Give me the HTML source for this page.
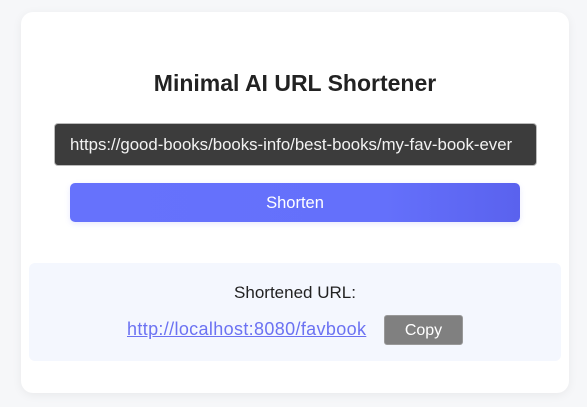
<!DOCTYPE html>
<html><head><style>
body{margin:0;width:587px;height:407px;background:#f6f7f9;font-family:"Liberation Sans",sans-serif;position:relative;overflow:hidden}
.card{position:absolute;left:21px;top:12px;width:548px;height:381px;background:#fff;border-radius:12px;box-shadow:0 2px 10px rgba(0,0,0,0.06)}
.t{position:absolute;left:0;width:590px;top:70px;text-align:center;font-weight:bold;font-size:23px;color:#222}
.in{position:absolute;left:54px;top:123px;width:483px;height:43px;box-sizing:border-box;background:#3c3c3c;border:1px solid #bbb;border-radius:4px;color:#f2f2f2;font-size:16.8px;line-height:41px;padding-left:15px;white-space:nowrap}
.btn{position:absolute;left:70px;top:183px;width:450px;height:39px;border-radius:5px;background:linear-gradient(90deg,#6672fc,#6470fb 70%,#5a62ee);color:#fff;font-size:16.5px;text-align:center;line-height:40px;box-shadow:0 2px 6px rgba(100,110,250,0.15)}
.res{position:absolute;left:29px;top:263px;width:532px;height:98px;background:#f4f7fe;border-radius:6px}
.l{position:absolute;left:0;width:590px;top:283px;text-align:center;font-size:17px;color:#222}
.a{position:absolute;left:127px;top:319px;font-size:18px;letter-spacing:0.35px;color:#6b72f2;text-decoration:underline;white-space:nowrap}
.c{position:absolute;left:384px;top:315px;width:79px;height:30px;box-sizing:border-box;background:#808080;border:1px solid #999;border-radius:3px;color:#fff;font-size:16px;text-align:center;line-height:29px}
</style></head><body>
<div class="card"></div>
<div class="t">Minimal AI URL Shortener</div>
<div class="in">https://good-books/books-info/best-books/my-fav-book-ever</div>
<div class="btn">Shorten</div>
<div class="res"></div>
<div class="l">Shortened URL:</div>
<div class="a">http://localhost:8080/favbook</div>
<div class="c">Copy</div>
</body></html>
